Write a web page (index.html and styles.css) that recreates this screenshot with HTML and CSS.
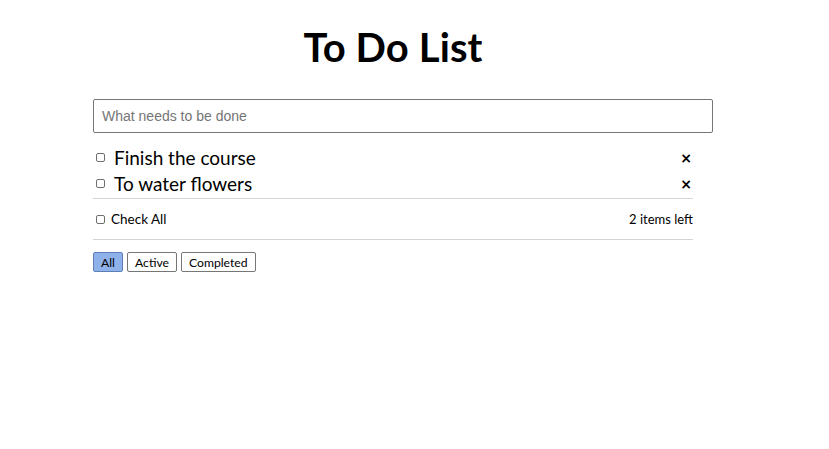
FILE: index.html
```html
<!DOCTYPE html>
<html>
<head>
<meta charset="utf-8">
<link rel="stylesheet" href="styles.css">
</head>
<body>
<div class="app">
  <h1 class="title">To Do List</h1>
  <input class="new-todo" type="text" placeholder="What needs to be done">
  <ul class="list">
    <li class="item"><input class="check" type="checkbox"><span class="label">Finish the course</span><span class="remove">×</span></li>
    <li class="item"><input class="check" type="checkbox"><span class="label">To water flowers</span><span class="remove">×</span></li>
  </ul>
  <div class="footer">
    <label class="check-all"><input class="check" type="checkbox"><span>Check All</span></label>
    <span class="count">2 items left</span>
  </div>
  <div class="filters">
    <button class="filter active">All</button>
    <button class="filter">Active</button>
    <button class="filter">Completed</button>
  </div>
</div>
</body>
</html>
```
FILE: styles.css
```css
html, body { margin: 0; padding: 0; background: #fff; }
body { font-family: Lato, "Noto Sans", sans-serif; color: #000; }
.app { width: 600px; margin-left: 93px; padding-top: 22px; }
.title { margin: 0; height: 50px; line-height: 50px; font-size: 40px; font-weight: 700; text-align: center; letter-spacing: 0.1px; }
.new-todo { display: block; margin: 27px 0 0; width: 620px; height: 34px; box-sizing: border-box; border: 1px solid #767676; border-radius: 2px; padding: 0 8px; font-family: "Liberation Sans", Arial, sans-serif; font-size: 14px; color: #000; outline: none; }
.new-todo::placeholder { color: #757575; }
.list { list-style: none; margin: 11px 0 0; padding: 0 0 2px; border-bottom: 1px solid #d4d4d4; }
.item { display: flex; align-items: center; height: 26px; font-size: 19px; }
.check { appearance: none; -webkit-appearance: none; width: 9px; height: 9px; margin: 0 9px 0 3px; border: 1px solid #6f6f6f; border-radius: 2px; background: #fff; flex: none; box-sizing: border-box; }
.label { flex: 1; }
.remove { font-size: 14px; width: 12px; text-align: center; margin-right: 1px; margin-top: 2px; font-family: "DejaVu Sans", sans-serif; font-weight: 700; }
.footer { display: flex; align-items: center; justify-content: space-between; height: 40px; border-bottom: 1px solid #d4d4d4; font-size: 13px; }
.check-all { display: flex; align-items: center; font-size: 13.5px; }
.check-all .check { margin-right: 6px; }
.filters { display: flex; gap: 4px; margin-top: 12px; }
.filter { height: 20px; padding: 0 7px; font-family: Lato, "Noto Sans", sans-serif; font-size: 12.2px; color: #000; background: #fff; border: 1px solid #767676; border-radius: 2px; }
.filter.active { background: #8fb1ea; border-color: #5f7fb8; }
```
